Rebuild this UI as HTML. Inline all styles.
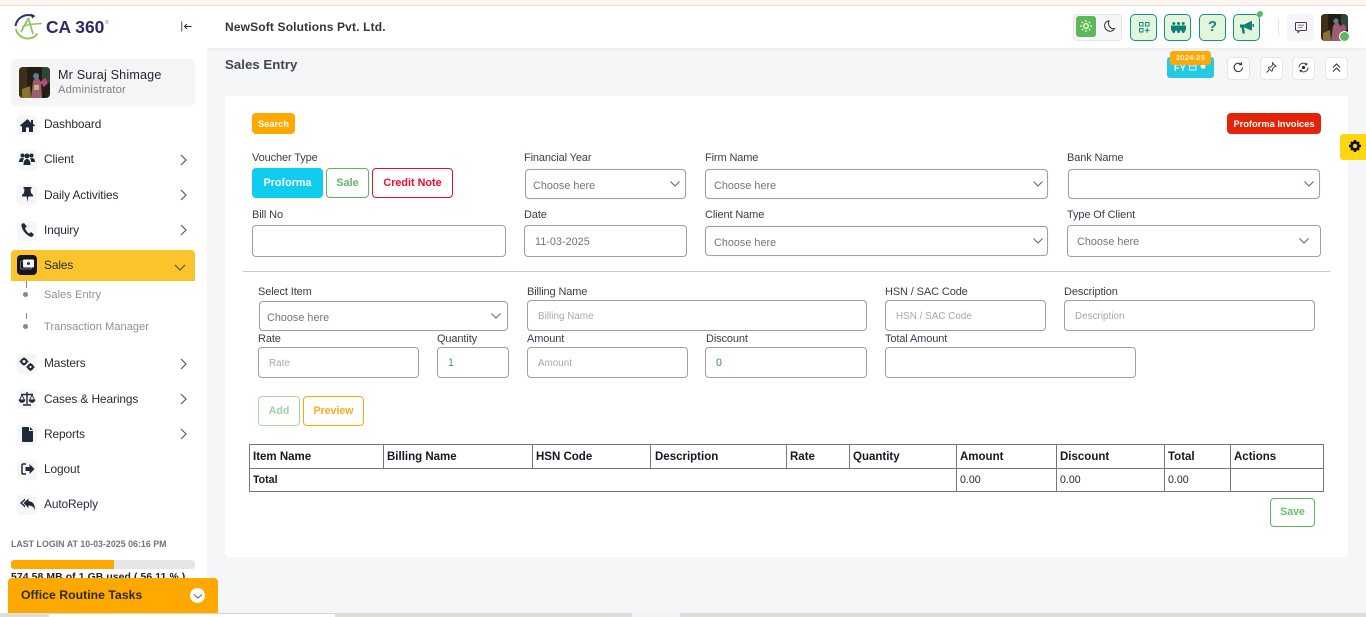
<!DOCTYPE html>
<html><head><meta charset="utf-8"><title>Sales Entry</title>
<style>
html,body{margin:0;padding:0}
body{width:1366px;height:617px;overflow:hidden;position:relative;background:#f5f6f8;font-family:"Liberation Sans",sans-serif;color:#2c3440}
.a,.t,.f,.b,.ib{position:absolute;box-sizing:border-box}
.t{white-space:nowrap;line-height:20px;height:20px;font-size:12px}
.m{font-size:11.9px;color:#262c36;letter-spacing:-.1px}
.s{font-size:11px;color:#8c9097;letter-spacing:.08px}
.l{font-size:11px;color:#39404c;letter-spacing:-.12px;margin-top:1px}
.ph{color:#a5a7ab;font-size:9.8px;letter-spacing:.05px;margin-top:1px}
.sv{color:#6f7580;font-size:10.8px;letter-spacing:.03px;margin-top:1px}
.f{border:1px solid #a0a0a0;border-radius:4px;background:#fff}
.sel{box-shadow:0 0 1px #ddd}
.b{border-radius:4px;font-weight:bold;text-align:center;white-space:nowrap}
.ic{position:absolute;left:17px;width:20px;height:20px;background:#f6f6f6;border-radius:4px}
.ib{width:27px;height:27px;background:#e3f5da;border:1.5px solid #0f9488;border-radius:5px;top:14px}
.tb{width:23px;height:23px;top:57px;background:#fff;border:1px solid #e6e6e6;border-radius:4px}
svg{position:absolute;overflow:visible}
.th{font-weight:bold;color:#14181f;font-size:11.5px;margin-top:1px}
.td{color:#1d222a;font-size:10.6px}
.v{position:absolute;width:1px;background:#777;top:444px;height:48px}
</style></head><body>

<div class="a" style="left:0;top:0;width:1366px;height:5px;background:#fff5f1"></div>
<div class="a" style="left:0;top:5px;width:1366px;height:1px;background:#e5e2e2"></div>
<div class="a" style="left:0;top:6px;width:1366px;height:42px;background:#fff;box-shadow:0 1px 3px rgba(0,0,0,.06)"></div>
<div class="a" style="left:0;top:6px;width:207px;height:607px;background:#fff"></div>

<!-- logo -->
<svg style="left:14px;top:13px" width="30" height="28" viewBox="0 0 30 28" fill="none">
<path d="M19 3C12 0 3 4 1.500 13" stroke="#2f2c72" stroke-width="2"/>
<path d="M17 0.500l4.500 2.500-3.500 2.500z" fill="#2f2c72"/>
<path d="M2 16c1 6 7 10 13 9.500 4-.4 7-2.500 8.500-5" stroke="#8cc95c" stroke-width="2"/>
<path d="M7 19C10 14 12 9 14.500 5.500L19 21" stroke="#8cc95c" stroke-width="1.800"/>
<path d="M8 14c5-2.500 11-3 20-3.500" stroke="#8cc95c" stroke-width="1.500"/>
</svg>
<div class="t" style="left:46px;top:17px;font-size:17.4px;font-weight:bold;color:#2d2a6c">CA 360</div>
<div class="t" style="left:105px;top:13px;font-size:5px;color:#777">®</div>
<svg style="left:181px;top:21px" width="12" height="12" viewBox="0 0 12 12" fill="none"><path d="M.7 .5v10" stroke="#7a5a30" stroke-width="1.100"/><path d="M3.500 5.500h7M6 3L3.500 5.500 6 8" stroke="#25303d" stroke-width="1"/></svg>

<div class="t" style="left:225px;top:17px;font-size:12px;font-weight:bold;color:#30353f;letter-spacing:.15px">NewSoft Solutions Pvt. Ltd.</div>

<!-- user card -->
<div class="a" style="left:11px;top:59px;width:184px;height:47px;background:#f5f5f5;border-radius:5px"></div>
<svg style="left:19px;top:67px" width="31" height="31" viewBox="0 0 31 31"><defs><clipPath id="c1"><rect width="31" height="31" rx="4"/></clipPath></defs><g clip-path="url(#c1)"><rect width="31" height="31" fill="#241d14"/><rect x="0" y="0" width="8" height="31" fill="#3e3016"/><rect x="23" y="0" width="8" height="16" fill="#2e4638"/><path d="M12 31L14 14l4-5 4 6 1 16z" fill="#9a5f70"/><circle cx="17" cy="9" r="3" fill="#4f8494"/><path d="M3 22l8-3 1 12H3z" fill="#8a7330"/><path d="M21 15l5-4 3 5-4 4z" fill="#b8457c"/><path d="M15 18h5v5h-5z" fill="#c9b283"/></g></svg>
<div class="t" style="left:58px;top:65px;font-size:12.6px;color:#1c2330;letter-spacing:.17px">Mr Suraj Shimage</div>
<div class="t" style="left:58px;top:80px;font-size:11.2px;color:#7d8087;letter-spacing:.15px">Administrator</div>

<!-- sidebar -->
<div class="a" style="left:11px;top:250px;width:184px;height:31px;background:#fbc42c;border-radius:4px 4px 0 0"></div>

<div class="ic" style="top:115px"></div>
<svg style="left:20px;top:118px" width="15" height="14" viewBox="0 0 15 14" fill="#1f2937"><path d="M7.500 1L0 7.500l1 1 1-.8V14h4V9.500h3V14h4V7.700l1 .8 1-1-2-1.800V2h-2v2.800z"/></svg>
<div class="t m" style="left:44px;top:114px">Dashboard</div>

<div class="ic" style="top:150px"></div>
<svg style="left:19px;top:153px" width="16" height="13" viewBox="0 0 16 13" fill="#1f2937"><circle cx="3.500" cy="2.500" r="2"/><circle cx="12.500" cy="2.500" r="2"/><circle cx="8" cy="3" r="2.500"/><path d="M0 9c0-3 1.500-4 3-4s2 .5 2 .5C4 7 4 8 4 9zM16 9c0-3-1.500-4-3-4s-2 .5-2 .5c1 1.500 1 2.500 1 3.500zM4.500 12c0-4 1.500-6 3.500-6s3.500 2 3.500 6z"/></svg>
<div class="t m" style="left:44px;top:149px">Client</div>

<div class="ic" style="top:185px"></div>
<svg style="left:22px;top:187px" width="11" height="15" viewBox="0 0 11 15" fill="#1f2937"><path d="M1.500 0h8v1.500L8.500 2l.5 4 2 2v1.500H6.300L5.500 15l-.8-5.500H0V8l2-2 .5-4-1-.5z"/></svg>
<div class="t m" style="left:44px;top:185px">Daily Activities</div>

<div class="ic" style="top:221px"></div>
<svg style="left:21px;top:223px" width="13" height="14" viewBox="0 0 13 14" fill="#1f2937"><path d="M3 0L.5 1C0 6 5 13 11 14l2-2.500-3-2.500-2 1.500C6.500 9.500 4.500 7 4 5l1.800-1.500z"/></svg>
<div class="t m" style="left:44px;top:220px">Inquiry</div>

<div class="a" style="left:17px;top:255px;width:20px;height:20px;background:#15151b;border-radius:4px"></div>
<svg style="left:20px;top:259px" width="15" height="11" viewBox="0 0 15 11" fill="none"><rect x=".5" y="2" width="11" height="8" rx="1" stroke="#8e8e98" stroke-width=".7"/><rect x="3" y=".5" width="11" height="8" rx="1" fill="#f4f4f4"/><circle cx="8.500" cy="4.500" r="1.500" fill="#27304e"/></svg>
<div class="t m" style="left:44px;top:255px">Sales</div>

<div class="a" style="left:26px;top:281px;width:1px;height:7px;background:#8b8b8b"></div>
<div class="a" style="left:23px;top:292px;width:5px;height:5px;border-radius:50%;background:#888"></div>
<div class="t s" style="left:44px;top:285px">Sales Entry</div>
<div class="a" style="left:26px;top:313px;width:1px;height:6px;background:#8b8b8b"></div>
<div class="a" style="left:23px;top:324px;width:5px;height:5px;border-radius:50%;background:#888"></div>
<div class="t s" style="left:44px;top:317px">Transaction Manager</div>

<div class="ic" style="top:354px"></div>
<svg style="left:19px;top:357px" width="16" height="15" viewBox="0 0 16 15" fill="#1f2937"><circle cx="5" cy="4.500" r="2.500" fill="none" stroke="#1f2937" stroke-width="2"/><circle cx="11.500" cy="10" r="2.200" fill="none" stroke="#1f2937" stroke-width="2.200"/><path d="M4.300 .5h1.400v1.500H4.300zM4.300 7h1.400v1.500H4.300zM.5 3.800H2v1.400H.5zM8 3.800h1.500v1.400H8zM10.800 6h1.400v1.500h-1.400zM10.800 12.500h1.400V14h-1.400zM7.500 9.300H9v1.400H7.500zM14 9.300h1.500v1.400H14z"/></svg>
<div class="t m" style="left:44px;top:353px">Masters</div>

<div class="ic" style="top:389px"></div>
<svg style="left:19px;top:392px" width="16" height="14" viewBox="0 0 16 14" fill="none" stroke="#1f2937"><path d="M8 0v12M4 13h8M2 2.500h12" stroke-width="1.400"/><path d="M3 3L.5 8h5zM13 3l-2.500 5h5z" stroke-width=".9"/><path d="M.3 8a2.700 2.200 0 0 0 5.400 0zM10.300 8a2.700 2.200 0 0 0 5.400 0z" fill="#1f2937"/></svg>
<div class="t m" style="left:44px;top:389px">Cases &amp; Hearings</div>

<div class="ic" style="top:425px"></div>
<svg style="left:22px;top:427px" width="11" height="15" viewBox="0 0 11 15" fill="#1f2937"><path d="M0 1q0-1 1-1h6v4h4v10q0 1-1 1H1q-1 0-1-1zM8 0l3 3H8z"/></svg>
<div class="t m" style="left:44px;top:424px">Reports</div>

<div class="ic" style="top:460px"></div>
<svg style="left:21px;top:463px" width="14" height="12" viewBox="0 0 14 12" fill="#1f2937"><path d="M8.500 1l5 5-5 5V8H4.500V4h4z"/><path d="M5 1H2Q1 1 1 2v8q0 1 1 1h3" fill="none" stroke="#1f2937" stroke-width="1.500"/></svg>
<div class="t m" style="left:44px;top:459px">Logout</div>

<div class="ic" style="top:495px"></div>
<svg style="left:20px;top:498px" width="15" height="13" viewBox="0 0 15 13" fill="#1f2937"><path d="M5 .5v2L2 5l3 2.500v2L0 5z"/><path d="M8.500 .5v2.800c3.500 0 6.500 2 6.500 9.200-1-3.500-3-5-6.500-5v2.500L3.500 5z"/></svg>
<div class="t m" style="left:44px;top:494px">AutoReply</div>

<svg style="left:180px;top:155px" width="8" height="10" viewBox="0 0 8 10" fill="none" stroke="#555b63" stroke-width="1.200"><path d="M1 0l5 5-5 5"/></svg>
<svg style="left:180px;top:190px" width="8" height="10" viewBox="0 0 8 10" fill="none" stroke="#555b63" stroke-width="1.200"><path d="M1 0l5 5-5 5"/></svg>
<svg style="left:180px;top:225px" width="8" height="10" viewBox="0 0 8 10" fill="none" stroke="#555b63" stroke-width="1.200"><path d="M1 0l5 5-5 5"/></svg>
<svg style="left:175px;top:264px" width="10" height="8" viewBox="0 0 10 8" fill="none" stroke="#555b3a" stroke-width="1.200"><path d="M0 1l5 5 5-5"/></svg>
<svg style="left:180px;top:359px" width="8" height="10" viewBox="0 0 8 10" fill="none" stroke="#555b63" stroke-width="1.200"><path d="M1 0l5 5-5 5"/></svg>
<svg style="left:180px;top:394px" width="8" height="10" viewBox="0 0 8 10" fill="none" stroke="#555b63" stroke-width="1.200"><path d="M1 0l5 5-5 5"/></svg>
<svg style="left:180px;top:429px" width="8" height="10" viewBox="0 0 8 10" fill="none" stroke="#555b63" stroke-width="1.200"><path d="M1 0l5 5-5 5"/></svg>

<div class="t" style="left:11px;top:534px;font-size:8.8px;font-weight:bold;color:#6d7380;letter-spacing:.03px">LAST LOGIN AT 10-03-2025 06:16 PM</div>
<div class="a" style="left:11px;top:560px;width:184px;height:9px;background:#e5e5e5;border-radius:3px"></div>
<div class="a" style="left:11px;top:560px;width:103px;height:9px;background:#ffa800;border-radius:3px 0 0 3px"></div>
<div class="t" style="left:11px;top:568px;font-size:10.4px;font-weight:bold;color:#222;letter-spacing:.1px">574.58 MB of 1 GB used ( 56.11 % )</div>

<div class="a" style="left:8px;top:578px;width:210px;height:35px;background:#ffa800;border-radius:4px 4px 0 0"></div>
<div class="t" style="left:21px;top:585px;font-size:12.2px;font-weight:bold;color:#2d2a20;letter-spacing:.05px">Office Routine Tasks</div>
<div class="a" style="left:190px;top:588px;width:15px;height:15px;border-radius:50%;background:#fff"></div>
<svg style="left:194px;top:594px" width="8" height="5" viewBox="0 0 8 5" fill="none" stroke="#666" stroke-width="1.100"><path d="M0 .5l4 3.500 4-3.500"/></svg>

<!-- header right -->
<div class="a" style="left:1073px;top:14px;width:49px;height:27px;background:#f6f6f8;border:1px solid #e6e6e6;border-radius:4px"></div>
<div class="a" style="left:1076px;top:16px;width:20px;height:21px;background:#5cb85c;border-radius:3px"></div>
<svg style="left:1080px;top:20px" width="12" height="12" viewBox="0 0 12 12" fill="none" stroke="#f4fbd0"><circle cx="6" cy="6" r="2.300" stroke-width="1.400"/><path d="M6 0v2M6 10v2M0 6h2M10 6h2M1.800 1.800l1.300 1.300M8.900 8.900l1.300 1.300M1.800 10.200l1.300-1.300M8.900 3.100l1.300-1.300" stroke-width="1.200"/></svg>
<svg style="left:1104px;top:20px" width="11" height="12" viewBox="0 0 11 12" fill="none" stroke="#2a3038" stroke-width="1"><path d="M5 .7C2 1.200.5 3.500.6 6c.2 3 2.700 5.300 5.600 5.200 2-.1 3.500-1.100 4.300-2.700C7 9.500 3.200 6 5 .7z"/></svg>

<div class="ib" style="left:1130px"></div>
<svg style="left:1139px;top:22px" width="11" height="11" viewBox="0 0 11 11" fill="none" stroke="#0f8a80" stroke-width="1"><rect x=".5" y=".5" width="3.500" height="3.500"/><rect x="6.500" y=".5" width="3.500" height="3.500"/><rect x=".5" y="6.500" width="3.500" height="3.500"/><path d="M8.200 6v4.800M6 8.400h4.500"/></svg>
<div class="ib" style="left:1164px"></div>
<svg style="left:1171px;top:22px" width="15" height="11" viewBox="0 0 15 11" fill="#0f7f78"><circle cx="2.800" cy="1.500" r="1.500"/><circle cx="7.500" cy="1.500" r="1.500"/><circle cx="12.200" cy="1.500" r="1.500"/><path d="M0 3.500h5.300v4L3.500 11H2L0 7.500zM4.900 3.500h5.200v4L8.300 11H6.700L4.900 7.500zM9.700 3.500H15v4L13 11h-1.500L9.700 7.500z"/></svg>
<div class="ib" style="left:1199px"></div>
<div class="t" style="left:1199px;top:17px;width:27px;text-align:center;font-size:15px;font-weight:bold;color:#0f8a80">?</div>
<div class="ib" style="left:1233px"></div>
<svg style="left:1240px;top:21px" width="14" height="13" viewBox="0 0 14 13" fill="#0f7f78"><path d="M0 3.500h4.500L10 .5 12 0v9.500L10 9 4.500 6.500H4L5 12.500H2.500L1.500 6.500H0z"/><path d="M12.500 3h1.500v3h-1.500z"/></svg>
<div class="a" style="left:1257px;top:11px;width:6px;height:6px;border-radius:50%;background:#5cb85c"></div>

<div class="a" style="left:1278px;top:19px;width:1px;height:16px;background:#e3e3e3"></div>
<div class="a" style="left:1287px;top:14px;width:27px;height:27px;background:#f6f6f8;border-radius:4px"></div>
<svg style="left:1295px;top:22px" width="12" height="11" viewBox="0 0 12 11" fill="none" stroke="#3a3560" stroke-width="1"><path d="M1.500 .5h9q1 0 1 1v6q0 1-1 1H5L3 10.500V8.500H1.500q-1 0-1-1v-6q0-1 1-1z"/><path d="M3 3.200h6M3 5.500h4.500" stroke="#a0522d" stroke-width=".8"/></svg>
<svg style="left:1321px;top:14px" width="27" height="27" viewBox="0 0 27 27"><defs><clipPath id="c2"><rect width="27" height="27" rx="4"/></clipPath></defs><g clip-path="url(#c2)"><rect width="27" height="27" fill="#241d14"/><rect width="7" height="27" fill="#3e3016"/><rect x="20" width="7" height="14" fill="#2e4638"/><path d="M10 27L12 12l4-5 4 6 1 14z" fill="#9a5f70"/><circle cx="15" cy="7" r="2.600" fill="#4f8494"/><path d="M2 19l7-3 1 11H2z" fill="#8a7330"/><path d="M18 13l5-3 3 5-4 4z" fill="#b8457c"/></g></svg>
<div class="a" style="left:1339px;top:31px;width:11px;height:11px;border-radius:50%;background:#5cb85c;border:1.500px solid #fff"></div>

<!-- page title row -->
<div class="t" style="left:225px;top:55px;font-size:13.2px;font-weight:bold;color:#3f4651;letter-spacing:.05px">Sales Entry</div>
<div class="a" style="left:1167px;top:57px;width:47px;height:21px;background:#25c9e2;border-radius:3px"></div>
<div class="t" style="left:1174px;top:58px;font-size:9px;font-weight:bold;color:#eaf9fc;letter-spacing:.2px">FY</div>
<svg style="left:1189px;top:63px" width="18" height="8" viewBox="0 0 18 8" fill="none" stroke="#eaf9fc" stroke-width=".9"><rect x=".5" y=".5" width="6.500" height="6.500"/><path d="M.5 3h6.500"/><circle cx="14" cy="3.500" r="2" fill="#eaf9fc"/></svg>
<div class="a" style="left:1170px;top:51px;width:41px;height:14px;background:#ffa800;border-radius:3px"></div>
<div class="t" style="left:1170px;top:48px;width:41px;text-align:center;font-size:7.6px;font-weight:bold;color:#fff3d8;letter-spacing:.2px">2024-25</div>

<div class="a tb" style="left:1227px"></div>
<svg style="left:1233px;top:62px" width="11" height="11" viewBox="0 0 11 11" fill="none" stroke="#2a3038" stroke-width="1"><path d="M9.500 5.500a4.200 4.200 0 1 1-1.400-3.200"/><path d="M8.500 .3v2.500H6"/></svg>
<div class="a tb" style="left:1260px"></div>
<svg style="left:1266px;top:62px" width="11" height="11" viewBox="0 0 11 11" fill="none" stroke="#2a3038" stroke-width=".9"><path d="M6.500 .8l3.500 3.500-1.400.3-2 2-.2 2-1 .5-3-3 .5-1 2-.2 2-2zM3 8l-2.500 2.500"/></svg>
<div class="a tb" style="left:1292px"></div>
<svg style="left:1298px;top:62px" width="11" height="11" viewBox="0 0 11 11" fill="none" stroke="#2a3038" stroke-width=".9"><path d="M1 5.500a4.400 4.400 0 0 1 7.600-3M10 5.500a4.400 4.400 0 0 1-7.600 3M8.800.8v2H6.800M2.200 10.200v-2h2"/><circle cx="5.500" cy="5.500" r="1.200" fill="#2a3038"/></svg>
<div class="a tb" style="left:1325px"></div>
<svg style="left:1332px;top:63px" width="9" height="10" viewBox="0 0 9 10" fill="none" stroke="#2a3038" stroke-width="1"><path d="M1 4.500l3.500-3.500L8 4.500M1 8.500L4.500 5 8 8.500"/></svg>

<!-- card -->
<div class="a" style="left:225px;top:96px;width:1123px;height:461px;background:#fff;border-radius:4px"></div>
<div class="a" style="left:1340px;top:134px;width:26px;height:26px;background:#ffd60f;border-radius:3px 0 0 3px"></div>
<svg style="left:1349px;top:140px" width="12" height="12" viewBox="0 0 12 12"><circle cx="6" cy="6" r="3.500" fill="none" stroke="#111" stroke-width="2.600"/><path d="M4.800 0h2.400v2H4.800zM4.800 10h2.400v2H4.800zM0 4.800h2v2.400H0zM10 4.800h2v2.400h-2zM1.200 2.800l1.600-1.600 1.200 1.200-1.600 1.600zM8 9.600l1.600-1.600 1.200 1.200-1.600 1.600zM1.200 9.200L2.800 10.800 4 9.600 2.400 8zM8 2.400L9.600 4l1.200-1.200-1.600-1.600z" fill="#111"/></svg>

<div class="b" style="left:252px;top:113px;width:43px;height:21px;background:#ffa800;color:#fff;font-size:9.3px;line-height:22px">Search</div>
<div class="b" style="left:1227px;top:113px;width:94px;height:21px;background:#e42408;color:#fff;font-size:9.3px;line-height:22px">Proforma Invoices</div>

<div class="t l" style="left:252px;top:147px">Voucher Type</div>
<div class="b" style="left:252px;top:168px;width:71px;height:30px;background:#10cdf0;color:#fff;font-size:10.8px;line-height:30px">Proforma</div>
<div class="b" style="left:326px;top:168px;width:43px;height:30px;background:#fff;border:1px solid #5cb85c;color:#67b567;font-size:10.8px;line-height:28px">Sale</div>
<div class="b" style="left:372px;top:168px;width:81px;height:30px;background:#fff;border:1px solid #ee0a30;color:#ee0a30;font-size:10.8px;line-height:28px">Credit Note</div>

<div class="t l" style="left:524px;top:147px">Financial Year</div>
<div class="f sel" style="left:525px;top:169px;width:161px;height:30px"></div>
<div class="t sv" style="left:533px;top:175px">Choose here</div>
<div class="t l" style="left:705px;top:147px">Firm Name</div>
<div class="f sel" style="left:705px;top:169px;width:343px;height:30px"></div>
<div class="t sv" style="left:714px;top:175px">Choose here</div>
<div class="t l" style="left:1067px;top:147px">Bank Name</div>
<div class="f sel" style="left:1068px;top:169px;width:252px;height:30px"></div>

<div class="t l" style="left:252px;top:204px">Bill No</div>
<div class="f" style="left:252px;top:225px;width:254px;height:32px"></div>
<div class="t l" style="left:524px;top:204px">Date</div>
<div class="f" style="left:524px;top:225px;width:163px;height:32px"></div>
<div class="t sv" style="left:535px;top:231px">11-03-2025</div>
<div class="t l" style="left:705px;top:204px">Client Name</div>
<div class="f sel" style="left:705px;top:226px;width:343px;height:30px"></div>
<div class="t sv" style="left:714px;top:232px">Choose here</div>
<div class="t l" style="left:1067px;top:204px">Type Of Client</div>
<div class="f" style="left:1067px;top:225px;width:254px;height:32px"></div>
<div class="t sv" style="left:1077px;top:231px">Choose here</div>

<svg style="left:670px;top:181px" width="10" height="6" viewBox="0 0 10 6" fill="none" stroke="#5a6675" stroke-width="1"><path d="M.5 .5L5 5 9.500 .5"/></svg>
<svg style="left:1033px;top:181px" width="10" height="6" viewBox="0 0 10 6" fill="none" stroke="#5a6675" stroke-width="1"><path d="M.5 .5L5 5 9.500 .5"/></svg>
<svg style="left:1304px;top:181px" width="10" height="6" viewBox="0 0 10 6" fill="none" stroke="#5a6675" stroke-width="1"><path d="M.5 .5L5 5 9.500 .5"/></svg>
<svg style="left:1033px;top:238px" width="10" height="6" viewBox="0 0 10 6" fill="none" stroke="#5a6675" stroke-width="1"><path d="M.5 .5L5 5 9.500 .5"/></svg>
<svg style="left:1299px;top:238px" width="10" height="6" viewBox="0 0 10 6" fill="none" stroke="#5a6675" stroke-width="1"><path d="M.5 .5L5 5 9.500 .5"/></svg>

<div class="a" style="left:243px;top:271px;width:1087px;height:1px;background:#cccccc"></div>

<div class="t l" style="left:258px;top:281px">Select Item</div>
<div class="f sel" style="left:259px;top:301px;width:249px;height:30px"></div>
<div class="t sv" style="left:267px;top:307px">Choose here</div>
<svg style="left:491px;top:313px" width="10" height="6" viewBox="0 0 10 6" fill="none" stroke="#5a6675" stroke-width="1"><path d="M.5 .5L5 5 9.500 .5"/></svg>
<div class="t l" style="left:527px;top:281px">Billing Name</div>
<div class="f" style="left:527px;top:300px;width:340px;height:31px"></div>
<div class="t ph" style="left:538px;top:306px">Billing Name</div>
<div class="t l" style="left:885px;top:281px">HSN / SAC Code</div>
<div class="f" style="left:885px;top:300px;width:161px;height:31px"></div>
<div class="t ph" style="left:896px;top:306px">HSN / SAC Code</div>
<div class="t l" style="left:1064px;top:281px">Description</div>
<div class="f" style="left:1064px;top:300px;width:251px;height:31px"></div>
<div class="t ph" style="left:1075px;top:306px">Description</div>

<div class="t l" style="left:258px;top:328px">Rate</div>
<div class="f" style="left:258px;top:347px;width:161px;height:31px"></div>
<div class="t ph" style="left:269px;top:353px">Rate</div>
<div class="t l" style="left:437px;top:328px">Quantity</div>
<div class="f" style="left:437px;top:347px;width:72px;height:31px"></div>
<div class="t" style="left:448px;top:353px;font-size:10.6px;color:#2f9e90">1</div>
<div class="t l" style="left:527px;top:328px">Amount</div>
<div class="f" style="left:527px;top:347px;width:161px;height:31px"></div>
<div class="t ph" style="left:538px;top:353px">Amount</div>
<div class="t l" style="left:706px;top:328px">Discount</div>
<div class="f" style="left:705px;top:347px;width:162px;height:31px"></div>
<div class="t" style="left:716px;top:353px;font-size:10.6px;color:#3d78a8">0</div>
<div class="t l" style="left:885px;top:328px">Total Amount</div>
<div class="f" style="left:885px;top:347px;width:251px;height:31px"></div>

<div class="b" style="left:258px;top:396px;width:42px;height:30px;background:#fff;border:1px solid #a5d8a5;color:#9dd39d;font-size:10.6px;line-height:28px">Add</div>
<div class="b" style="left:303px;top:396px;width:61px;height:30px;background:#fff;border:1px solid #ffa800;color:#ffa81e;font-size:10.6px;line-height:28px">Preview</div>

<!-- table -->
<div class="a" style="left:249px;top:444px;width:1075px;height:48px;border:1px solid #777"></div>
<div class="a" style="left:249px;top:468px;width:1075px;height:1px;background:#777"></div>
<div class="v" style="left:383px;height:24px"></div>
<div class="v" style="left:532px;height:24px"></div>
<div class="v" style="left:650px;height:24px"></div>
<div class="v" style="left:786px;height:24px"></div>
<div class="v" style="left:849px;height:24px"></div>
<div class="v" style="left:956px"></div>
<div class="v" style="left:1056px"></div>
<div class="v" style="left:1164px"></div>
<div class="v" style="left:1230px"></div>
<div class="t th" style="left:253px;top:446px">Item Name</div>
<div class="t th" style="left:387px;top:446px">Billing Name</div>
<div class="t th" style="left:536px;top:446px">HSN Code</div>
<div class="t th" style="left:655px;top:446px">Description</div>
<div class="t th" style="left:790px;top:446px">Rate</div>
<div class="t th" style="left:853px;top:446px">Quantity</div>
<div class="t th" style="left:960px;top:446px">Amount</div>
<div class="t th" style="left:1060px;top:446px">Discount</div>
<div class="t th" style="left:1168px;top:446px">Total</div>
<div class="t th" style="left:1234px;top:446px">Actions</div>
<div class="t td" style="left:253px;top:470px;font-weight:bold;color:#14181f">Total</div>
<div class="t td" style="left:960px;top:470px">0.00</div>
<div class="t td" style="left:1060px;top:470px">0.00</div>
<div class="t td" style="left:1168px;top:470px">0.00</div>

<div class="b" style="left:1270px;top:498px;width:45px;height:29px;background:#fff;border:1px solid #5cb85c;color:#6cbd6c;font-size:10.6px;line-height:27px">Save</div>

<!-- bottom strip -->
<div class="a" style="left:0;top:613px;width:1366px;height:4px;background:#dededa"></div>
<div class="a" style="left:49px;top:613px;width:286px;height:4px;background:#fff;border-top:1px solid #d5d5d5"></div>
<div class="a" style="left:632px;top:613px;width:48px;height:4px;background:#f2f2f0"></div>

</body></html>
